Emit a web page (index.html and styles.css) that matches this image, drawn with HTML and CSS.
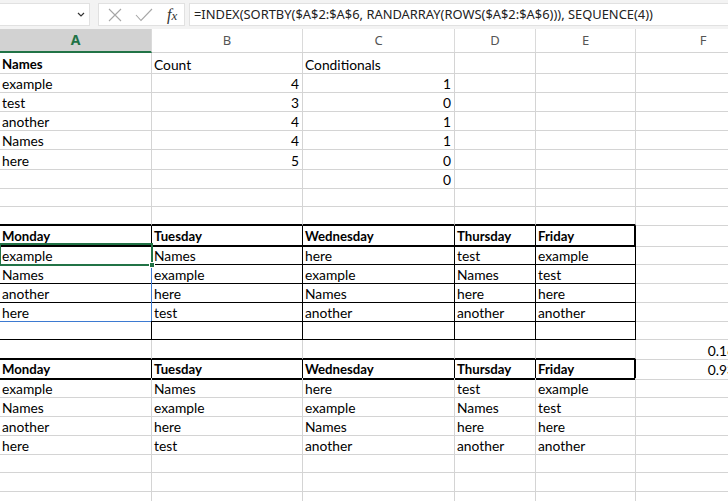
FILE: index.html
```html
<!DOCTYPE html>
<html>
<head>
  <title>Hoja</title>
  <link rel="stylesheet" href="styles.css">
</head>
<body>
  <div class="bar">
    <div class="namebox">
      <svg class="chev" width="8" height="5" viewBox="0 0 8 5"><polyline points="1,1 4,4 7,1" fill="none" stroke="#333" stroke-width="1.2"/></svg>
    </div>
    <div class="fxbox">
      <svg width="14" height="14" viewBox="0 0 14 14"><path d="M1 1 L13 13 M13 1 L1 13" stroke="#a6a6a6" stroke-width="1.1" fill="none"/></svg>
      <svg width="18" height="14" viewBox="0 0 18 14"><polyline points="1,7 6,12.5 17,1" stroke="#a6a6a6" stroke-width="1.1" fill="none"/></svg>
      <span class="fx"><i>f</i><i class="x">x</i></span>
    </div>
    <div class="formula">=INDEX(SORTBY($A$2:$A$6, RANDARRAY(ROWS($A$2:$A$6))), SEQUENCE(4))</div>
  </div>

  <div class="heads">
    <div class="h on">A</div><div class="h">B</div><div class="h">C</div><div class="h">D</div><div class="h">E</div><div class="h">F</div>
  </div>

  <div class="sheet">
    <div class="row tall"><div class="c b">Names</div><div class="c">Count</div><div class="c">Conditionals</div><div class="c"></div><div class="c"></div><div class="c"></div></div>
    <div class="row"><div class="c">example</div><div class="c n">4</div><div class="c n">1</div><div class="c"></div><div class="c"></div><div class="c"></div></div>
    <div class="row"><div class="c">test</div><div class="c n">3</div><div class="c n">0</div><div class="c"></div><div class="c"></div><div class="c"></div></div>
    <div class="row"><div class="c">another</div><div class="c n">4</div><div class="c n">1</div><div class="c"></div><div class="c"></div><div class="c"></div></div>
    <div class="row"><div class="c">Names</div><div class="c n">4</div><div class="c n">1</div><div class="c"></div><div class="c"></div><div class="c"></div></div>
    <div class="row tall"><div class="c">here</div><div class="c n">5</div><div class="c n">0</div><div class="c"></div><div class="c"></div><div class="c"></div></div>
    <div class="row"><div class="c"></div><div class="c"></div><div class="c n">0</div><div class="c"></div><div class="c"></div><div class="c"></div></div>
    <div class="row"><div class="c"></div><div class="c"></div><div class="c"></div><div class="c"></div><div class="c"></div><div class="c"></div></div>
    <!-- fila 9: borde grueso arriba de la tabla -->
    <div class="row"><div class="c top"></div><div class="c top"></div><div class="c top"></div><div class="c top"></div><div class="c top"></div><div class="c"></div></div>
    <div class="row"><div class="c hd">Monday</div><div class="c hd">Tuesday</div><div class="c hd">Wednesday</div><div class="c hd">Thursday</div><div class="c hd end">Friday</div><div class="c"></div></div>
    <div class="row"><div class="c bx sel">example<span class="handle"></span></div><div class="c bx">Names</div><div class="c bx">here</div><div class="c bx">test</div><div class="c bx">example</div><div class="c"></div></div>
    <div class="row"><div class="c bx spill">Names</div><div class="c bx">example</div><div class="c bx">example</div><div class="c bx">Names</div><div class="c bx">test</div><div class="c"></div></div>
    <div class="row"><div class="c bx spill">another</div><div class="c bx">here</div><div class="c bx">Names</div><div class="c bx">here</div><div class="c bx">here</div><div class="c"></div></div>
    <div class="row"><div class="c bx spill last">here</div><div class="c bx">test</div><div class="c bx">another</div><div class="c bx">another</div><div class="c bx">another</div><div class="c"></div></div>
    <div class="row"><div class="c bx"></div><div class="c bx"></div><div class="c bx"></div><div class="c bx"></div><div class="c bx"></div><div class="c"></div></div>
    <div class="row"><div class="c top"></div><div class="c top"></div><div class="c top"></div><div class="c top"></div><div class="c top"></div><div class="c n">0.162384</div></div>
    <div class="row"><div class="c hd">Monday</div><div class="c hd">Tuesday</div><div class="c hd">Wednesday</div><div class="c hd">Thursday</div><div class="c hd end">Friday</div><div class="c n">0.935127</div></div>
    <div class="row"><div class="c">example</div><div class="c">Names</div><div class="c">here</div><div class="c">test</div><div class="c">example</div><div class="c"></div></div>
    <div class="row"><div class="c">Names</div><div class="c">example</div><div class="c">example</div><div class="c">Names</div><div class="c">test</div><div class="c"></div></div>
    <div class="row"><div class="c">another</div><div class="c">here</div><div class="c">Names</div><div class="c">here</div><div class="c">here</div><div class="c"></div></div>
    <div class="row"><div class="c">here</div><div class="c">test</div><div class="c">another</div><div class="c">another</div><div class="c">another</div><div class="c"></div></div>
    <div class="row"><div class="c"></div><div class="c"></div><div class="c"></div><div class="c"></div><div class="c"></div><div class="c"></div></div>
    <div class="row"><div class="c"></div><div class="c"></div><div class="c"></div><div class="c"></div><div class="c"></div><div class="c"></div></div>
    <div class="row"><div class="c"></div><div class="c"></div><div class="c"></div><div class="c"></div><div class="c"></div><div class="c"></div></div>
  </div>
</body>
</html>
```

FILE: styles.css
```css
* {
  box-sizing: border-box;
}

body {
  margin: 0;
  width: 728px;
  height: 501px;
  overflow: hidden;
  background-color: #ffffff;
  font-family: "Lato", "Liberation Sans", sans-serif;
}

/* barra de formulas */
.bar {
  display: flex;
  height: 29px;
  padding: 3px 0;
  background-color: #f3f3f3;
}

.namebox {
  width: 91px;
  margin-left: -1px;
  background-color: #ffffff;
  border: 1px solid #e1e1e1;
  display: flex;
  align-items: center;
  justify-content: flex-end;
  padding-right: 4px;
}

.fxbox {
  width: 87px;
  margin-left: 8px;
  background-color: #ffffff;
  border: 1px solid #e1e1e1;
  display: flex;
  align-items: center;
  padding-left: 9px;
  gap: 13px;
}

.fx {
  font-family: "Liberation Serif", serif;
  font-size: 16px;
  color: #333;
  margin-left: 1px;
}

.fx .x {
  font-size: 13px;
}

.formula {
  flex: 1;
  margin-left: 4px;
  background-color: #ffffff;
  border: 1px solid #e1e1e1;
  border-right: none;
  padding-left: 4px;
  font-family: "Noto Sans", sans-serif;
  font-size: 12.9px;
  line-height: 21px;
  color: #222;
  white-space: nowrap;
}

/* encabezados de columna */
.heads,
.row {
  display: grid;
  grid-template-columns: 152px 151px 152px 81px 100px 135px;
}

.heads {
  height: 24px;
  border-bottom: 1px solid #d4d4d4;
}

.h {
  border-right: 1px solid #dadada;
  text-align: center;
  font-family: "Noto Sans", sans-serif;
  font-size: 13px;
  line-height: 23px;
  color: #555;
}

.h.on {
  background-color: #d2d2d2;
  color: #217346;
  font-weight: bold;
  font-size: 14px;
  border-bottom: 2px solid #217346;
  margin-bottom: -1px;
  line-height: 22px;
}

/* celdas */
.row {
  height: 19px;
}

.row.tall {
  height: 20px;
}

.c {
  position: relative;
  border-right: 1px solid #d4d4d4;
  border-bottom: 1px solid #d4d4d4;
  padding: 2px 2px 0;
  font-size: 13.8px;
  line-height: 17px;
  color: #000;
  white-space: nowrap;
}

.row.tall .c {
  padding-top: 3px;
}

.c.b {
  font-weight: bold;
  font-size: 13.2px;
}

.c.n {
  text-align: right;
  padding-right: 3px;
}

.c.top {
  border-bottom: 2px solid #000;
}

.c.hd {
  font-weight: bold;
  font-size: 13.2px;
  border-right: 1px solid #000;
  border-bottom: 2px solid #000;
}

.c.hd.end {
  border-right: 2px solid #000;
}

.c.bx {
  border-right-color: #000;
  border-bottom-color: #000;
}

.c.spill {
  border-right-color: #3d7ad1;
}

.c.spill.last {
  border-bottom-color: #3d7ad1;
}

.c.sel::after {
  content: "";
  position: absolute;
  left: -1px;
  top: -2px;
  right: -2px;
  bottom: -2px;
  border: 2px solid #217346;
}

.handle {
  position: absolute;
  right: -4px;
  bottom: -4px;
  width: 6px;
  height: 6px;
  background-color: #217346;
  border: 1px solid #ffffff;
  z-index: 1;
}
```
